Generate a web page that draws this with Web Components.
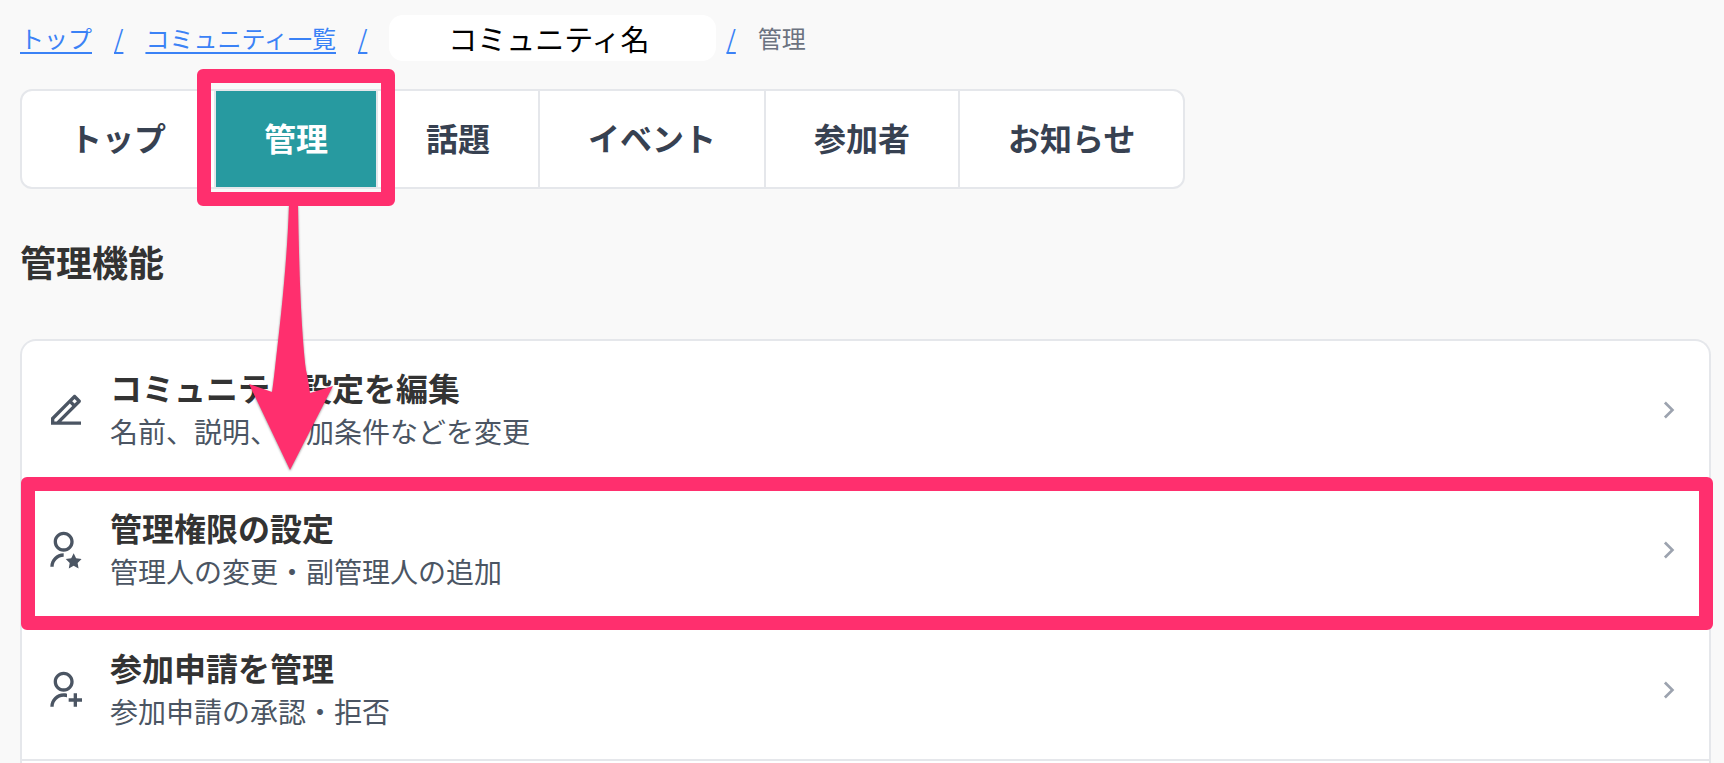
<!DOCTYPE html>
<html lang="ja">
<head>
<meta charset="UTF-8">
<meta name="viewport" content="width=device-width, initial-scale=1">
<title>管理機能</title>
<style>
  body {
    margin: 0;
    background: #f9f9f9;
    color: #333333;
    font-family: "Noto Sans CJK JP", "Liberation Sans", sans-serif;
    --border-color: #e5e7eb;
    --link-color: #3b82f6;
    --active-color: #279aa0;
    --mark-color: #ff2f6e;
  }
</style>
</head>
<body>
<community-page>
  <bread-crumb slot="breadcrumb"></bread-crumb>
  <tab-bar slot="tabs">
    <tab-item>トップ</tab-item>
    <tab-item active>管理</tab-item>
    <tab-item>話題</tab-item>
    <tab-item>イベント</tab-item>
    <tab-item>参加者</tab-item>
    <tab-item>お知らせ</tab-item>
  </tab-bar>
  <span slot="heading">管理機能</span>
  <menu-row icon="edit">
    コミュニティ設定を編集
    <span slot="desc">名前、説明、参加条件などを変更</span>
  </menu-row>
  <menu-row icon="star" marked>
    管理権限の設定
    <span slot="desc">管理人の変更・副管理人の追加</span>
  </menu-row>
  <menu-row icon="add">
    参加申請を管理
    <span slot="desc">参加申請の承認・拒否</span>
  </menu-row>
</community-page>

<script>
const USER_HEAD = "M12 13C8.685 13 6 10.315 6 7C6 3.685 8.685 1 12 1C15.315 1 18 3.685 18 7C18 10.315 15.315 13 12 13ZM12 11C14.21 11 16 9.21 16 7C16 4.79 14.21 3 12 3C9.79 3 8 4.79 8 7C8 9.21 9.79 11 12 11Z";

const ICONS = {
  edit: {
    viewBox: "0 0 24 24",
    path: "M5 18.89H6.41421L15.7279 9.57627L14.3137 8.16206L5 17.4758V18.89ZM21 20.89H3V16.6473L16.435 3.21233C16.8256 2.8218 17.4587 2.8218 17.8492 3.21233L20.6777 6.04075C21.0682 6.43128 21.0682 7.06444 20.6777 7.45497L9.24264 18.89H21V20.89ZM15.7279 6.74785L17.1421 8.16206L18.5563 6.74785L17.1421 5.33364L15.7279 6.74785Z",
  },
  star: {
    viewBox: "1.4 0 24 24",
    path: "M12 14V16C8.68629 16 6 18.6863 6 22H4C4 17.5817 7.58172 14 12 14Z" + USER_HEAD + "M18 21.5L15.0611 23.0451L15.6224 19.7725L13.2447 17.4549L16.5305 16.9775L18 14L19.4695 16.9775L22.7553 17.4549L20.3776 19.7725L20.9389 23.0451L18 21.5Z",
  },
  add: {
    viewBox: "1.4 0 24 24",
    path: "M14 14.252V16.3414C13.3744 16.1203 12.7013 16 12 16C8.68629 16 6 18.6863 6 22H4C4 17.5817 7.58172 14 12 14C12.6906 14 13.3608 14.0875 14 14.252Z" + USER_HEAD + "M18 17V14H20V17H23V19H20V22H18V19H15V17H18Z",
  },
};

// Page layout
class CommunityPage extends HTMLElement {
  constructor() {
    super();
    this.attachShadow({ mode: "open" });
  }

  connectedCallback() {
    this.shadowRoot.innerHTML = `
      <style>
        :host {
          display: flex;
          flex-direction: column;
          box-sizing: border-box;
          min-height: 100vh;
          padding: 15px 13px 0 20px;
        }
        h1 {
          margin: 45px 0 51px;
          font-size: 36px;
          line-height: 54px;
          font-weight: 700;
        }
        .card {
          flex: 1;
          border: 2px solid var(--border-color);
          border-bottom: 0;
          border-radius: 16px 16px 0 0;
          background: #ffffff;
        }
      </style>
      <slot name="breadcrumb"></slot>
      <slot name="tabs"></slot>
      <h1><slot name="heading"></slot></h1>
      <div class="card"><slot></slot></div>
    `;
  }
}

// Breadcrumb
class BreadCrumb extends HTMLElement {
  constructor() {
    super();
    this.attachShadow({ mode: "open" });
  }

  connectedCallback() {
    this.shadowRoot.innerHTML = `
      <style>
        :host {
          display: block;
          margin-bottom: 28px;
        }
        nav {
          display: flex;
          align-items: center;
          height: 46px;
          font-size: 24px;
          line-height: 36px;
          white-space: nowrap;
        }
        a,
        .sep {
          color: var(--link-color);
          text-decoration: underline;
          text-decoration-thickness: 2px;
          text-underline-offset: 4px;
          text-decoration-skip-ink: none;
        }
        .sep {
          margin: 0 22px;
        }
        a.name {
          box-sizing: border-box;
          width: 327px;
          padding-right: 8px;
          border-radius: 14px;
          background: #ffffff;
          color: #000000;
          font-size: 29px;
          line-height: 46px;
          text-align: center;
          text-decoration: none;
        }
        .name + .sep {
          margin-left: 10px;
        }
        .current {
          color: #6b7280;
        }
      </style>
      <nav aria-label="パンくずリスト">
        <a href="#top">トップ</a>
        <span class="sep">/</span>
        <a href="#list">コミュニティ一覧</a>
        <span class="sep">/</span>
        <a class="name" href="#community">コミュニティ名</a>
        <span class="sep">/</span>
        <span class="current">管理</span>
      </nav>
    `;
  }
}

// Tab strip
class TabBar extends HTMLElement {
  constructor() {
    super();
    this.attachShadow({ mode: "open" });
  }

  connectedCallback() {
    this.shadowRoot.innerHTML = `
      <style>
        :host {
          display: flex;
          align-self: flex-start;
          border: 2px solid var(--border-color);
          border-radius: 12px;
          background: #ffffff;
        }
        ::slotted(tab-item:not(:last-child)) {
          border-right: 2px solid var(--border-color);
        }
      </style>
      <slot></slot>
    `;
  }
}

class TabItem extends HTMLElement {
  constructor() {
    super();
    this.attachShadow({ mode: "open" });
  }

  connectedCallback() {
    const active = this.hasAttribute("active");

    this.shadowRoot.innerHTML = `
      <style>
        :host {
          display: block;
          position: relative;
        }
        a {
          display: block;
          padding: 22px 48px 26px;
          color: #374151;
          font-size: 32px;
          line-height: 48px;
          font-weight: 700;
          text-decoration: none;
          white-space: nowrap;
        }
        :host([active]) a {
          background: var(--active-color);
          color: #ffffff;
        }
        .mark {
          position: absolute;
          z-index: 2;
          inset: -22px -19px -19px;
          border: 14px solid var(--mark-color);
          border-radius: 6px;
          pointer-events: none;
        }
        .arrow {
          position: absolute;
          z-index: 2;
          top: 114px;
          left: 32px;
          overflow: visible;
          fill: var(--mark-color);
          filter: drop-shadow(0 1px 1px rgba(0,0,0,0.4));
          pointer-events: none;
        }
      </style>
      <a href="#" ${active ? 'aria-current="page"' : ""}><slot></slot></a>
      ${
        active
          ? `<svg class="arrow" width="86" height="266" viewBox="0 0 86 266" aria-hidden="true">
               <path d="M41 0H50C51 60 53 125 58 165C60 173 61 181 62 188L85 181L42 265L1 179L24 187C25 180 26 172 27 163C32 120 39 60 41 0Z"/>
             </svg>
             <div class="mark"></div>`
          : ""
      }
    `;
  }
}

// One entry of the management menu
class MenuRow extends HTMLElement {
  constructor() {
    super();
    this.attachShadow({ mode: "open" });
  }

  connectedCallback() {
    const icon = ICONS[this.getAttribute("icon")];

    this.shadowRoot.innerHTML = `
      <style>
        :host {
          display: block;
          position: relative;
          border-bottom: 2px solid var(--border-color);
        }
        a {
          display: flex;
          align-items: center;
          gap: 24px;
          padding: 22px 24px;
          color: inherit;
          text-decoration: none;
        }
        svg {
          flex: none;
        }
        .icon {
          fill: #4b5563;
        }
        .chevron {
          fill: #9ca3af;
        }
        .text {
          flex: 1;
          padding-bottom: 6px;
        }
        .title {
          font-size: 32px;
          line-height: 48px;
          font-weight: 700;
        }
        .desc {
          color: #4b5563;
          font-size: 28px;
          line-height: 40px;
        }
        :host([marked])::after {
          content: "";
          position: absolute;
          inset: -4px -4px -11px -1px;
          border: 14px solid var(--mark-color);
          border-radius: 6px;
          pointer-events: none;
        }
      </style>
      <a href="#">
        <svg class="icon" width="40" height="40" viewBox="${icon.viewBox}" aria-hidden="true"><path d="${icon.path}"/></svg>
        <div class="text">
          <div class="title"><slot></slot></div>
          <div class="desc"><slot name="desc"></slot></div>
        </div>
        <svg class="chevron" width="32" height="32" viewBox="0 0 24 24" aria-hidden="true">
          <path d="M13.1717 12.0007L8.22192 7.05093L9.63614 5.63672L16.0001 12.0007L9.63614 18.3646L8.22192 16.9504L13.1717 12.0007Z"/>
        </svg>
      </a>
    `;
  }
}

// Register Custom Elements
customElements.define("community-page", CommunityPage);
customElements.define("bread-crumb", BreadCrumb);
customElements.define("tab-bar", TabBar);
customElements.define("tab-item", TabItem);
customElements.define("menu-row", MenuRow);
</script>
</body>
</html>
